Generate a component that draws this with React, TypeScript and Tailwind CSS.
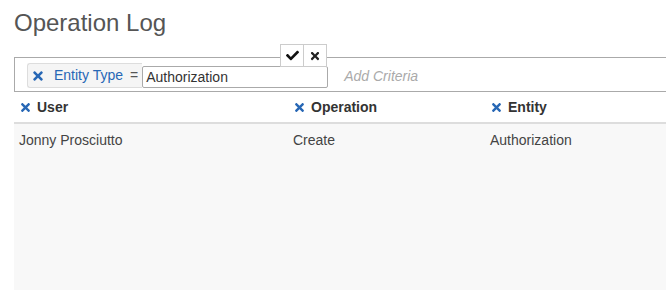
import { FaCheck, FaTimes } from "react-icons/fa"

const columns = [
  { label: "User", width: "w-[274px]" },
  { label: "Operation", width: "w-[197px]" },
  { label: "Entity", width: "flex-1" },
]

const rows = [["Jonny Prosciutto", "Create", "Authorization"]]

export default function App() {
  return (
    <div className="w-[666px] h-[301px] overflow-hidden bg-white font-['Liberation_Sans',Arial,sans-serif]">
      <div className="pl-[14px] w-[760px]">
        <h1 className="pt-[9px] text-[24px] leading-[28px] text-[#555]">Operation Log</h1>

        {/* filter bar */}
        <div className="relative mt-[20px] h-[35px] border border-r-0 border-[#aaa] pl-[12px] pt-[5px] flex items-end pb-[3px]">
          <div className="flex items-end">
            <div className="h-[25px] flex items-center bg-[#f5f5f5] border border-r-0 border-[#ddd] rounded-l-[3px] pl-[3px] pr-[4px] text-[14px]">
              <FaTimes className="text-[#2767b5] w-[14px] h-[14px]" />
              <span className="ml-[9px] text-[#2767b5]">Entity Type</span>
              <span className="ml-[7px] text-[#555]">=</span>
            </div>
            <div className="w-[186px] h-[22px] border border-[#aaa] rounded-[2px] bg-white pl-[3px] text-[14px] leading-[20px] text-[#333]">
              Authorization
            </div>
          </div>
          <span className="ml-[16px] self-center mt-[1px] text-[14px] italic text-[#aaa]">Add Criteria</span>

          <div className="absolute left-[265px] top-[-14px] flex bg-white border border-[#ccc]">
            <div className="w-[23px] h-[21px] flex items-center justify-center border-r border-[#ccc]">
              <FaCheck className="w-[13px] h-[13px] text-[#111]" />
            </div>
            <div className="w-[22px] h-[21px] flex items-center justify-center">
              <FaTimes className="w-[12px] h-[12px] text-[#222]" />
            </div>
          </div>
        </div>

        {/* table */}
        <div className="flex h-[30px] border-b-2 border-[#ddd] box-content">
          {columns.map((c) => (
            <div key={c.label} className={`${c.width} pl-[5px] py-[5px] flex items-center text-[14px] leading-[20px] font-bold text-[#333]`}>
              <FaTimes className="w-[13px] h-[13px] text-[#2767b5]" />
              <span className="ml-[5px]">{c.label}</span>
            </div>
          ))}
        </div>
        <div className="h-[166px] bg-[#f8f8f8]">
          {rows.map((r, i) => (
            <div key={i} className="flex pt-[6px]">
              {r.map((cell, j) => (
                <div key={j} className={`${columns[j].width} pl-[5px] text-[14px] leading-[20px] text-[#444]`}>
                  {cell}
                </div>
              ))}
            </div>
          ))}
        </div>
      </div>
    </div>
  )
}
